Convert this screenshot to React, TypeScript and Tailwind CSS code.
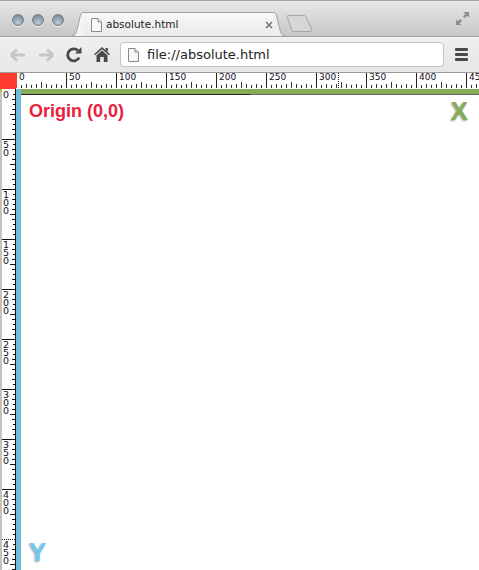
const HORIZONTAL = [0, 50, 100, 150, 200, 250, 300, 350, 400, 450];
const VERTICAL = [0, 50, 100, 150, 200, 250, 300, 350, 400, 450];
const TICKS = [1, 2, 3, 4, 5, 6, 7, 8, 9];

function Light() {
  return (
    <div className="h-[12px] w-[12px] rounded-full border border-[#77818a] bg-[radial-gradient(circle_at_50%_75%,#c3d2dd_0%,#94a5b3_45%,#6f7e8b_100%)] shadow-[0_1px_0_#f4f4f4]" />
  );
}

function PageIcon() {
  return (
    <svg viewBox="0 0 11 14" className="h-[14px] w-[11px] shrink-0">
      <path d="M.5.5H7L10.5 4V13.5H.5Z" fill="#f8f8f8" stroke="#8a8a8a" />
      <path d="M7 .5V4H10.5" fill="#e4e4e4" stroke="#8a8a8a" />
    </svg>
  );
}

function Tab() {
  return (
    <div className="ml-[8px] flex h-[24px] items-stretch self-end">
      <svg viewBox="0 0 11 24" className="h-[24px] w-[11px] shrink-0">
        <path d="M0 23.5C3 23.5 4 22 5 18L8 5C8.6 2 9.5.5 11 .5V24H0Z" fill="#f3f3f3" />
        <path d="M0 23.5C3 23.5 4 22 5 18L8 5C8.6 2 9.5.5 11 .5" fill="none" stroke="#a2a2a2" />
      </svg>
      <div className="flex w-[191px] shrink-0 items-center border-t border-[#a2a2a2] bg-[linear-gradient(#f7f7f7,#ebebeb)] pl-[8px]">
        <PageIcon />
        <span className="ml-[4px] w-[159px] font-['DejaVu_Sans',sans-serif] text-[10.5px] text-[#222]">absolute.html</span>
        <svg viewBox="0 0 8 8" className="h-[8px] w-[8px] shrink-0">
          <path d="M1 1L7 7M7 1L1 7" stroke="#777" strokeWidth="1.6" />
        </svg>
      </div>
      <svg viewBox="0 0 11 24" className="h-[24px] w-[11px] shrink-0">
        <path d="M11 23.5C8 23.5 7 22 6 18L3 5C2.4 2 1.5.5 0 .5V24H11Z" fill="#eeeeee" />
        <path d="M11 23.5C8 23.5 7 22 6 18L3 5C2.4 2 1.5.5 0 .5" fill="none" stroke="#a2a2a2" />
      </svg>
    </div>
  );
}

function TitleBar() {
  return (
    <div className="flex h-[37px] shrink-0 items-center border-t border-b border-t-[#a6a6a6] border-b-[#a2a2a2] bg-[linear-gradient(#e8e8e8,#c6c6c6)]">
      <div className="ml-[12px] flex gap-[8px] pt-[3px]">
        <Light />
        <Light />
        <Light />
      </div>
      <Tab />
      <svg viewBox="0 0 27 17" className="ml-[1px] mt-[9px] h-[17px] w-[27px] shrink-0">
        <path d="M1 1.5C1 1 1.5.5 2 .5H18C19 .5 19.5 1 20 2L25.5 14C26 15.5 25.5 16.5 24 16.5H8C7 16.5 6.3 16 5.8 15Z" fill="#d6d6d6" stroke="#a4a4a4" />
      </svg>
      <svg viewBox="0 0 16 16" className="ml-auto mr-[9px] h-[15px] w-[15px] shrink-0">
        <path d="M9 1H15V7L13 5L10.5 7.5L8.5 5.5L11 3Z" fill="#8f8f8f" />
        <path d="M7 15H1V9L3 11L5.5 8.5L7.5 10.5L5 13Z" fill="#8f8f8f" />
      </svg>
    </div>
  );
}

function Toolbar() {
  return (
    <div className="flex h-[36px] shrink-0 items-center border-b border-[#9c9c9c] bg-[linear-gradient(#f0f0f0,#e6e6e6)]">
      <svg viewBox="0 0 16 14" className="ml-[10px] h-[14px] w-[16px] shrink-0">
        <path d="M1 7L7 1.5M1 7L7 12.5M1 7H15" fill="none" stroke="#c6c6c6" strokeWidth="3" />
      </svg>
      <svg viewBox="0 0 16 14" className="ml-[12px] h-[14px] w-[16px] shrink-0">
        <path d="M15 7L9 1.5M15 7L9 12.5M15 7H1" fill="none" stroke="#c6c6c6" strokeWidth="3" />
      </svg>
      <svg viewBox="0 0 16 16" className="ml-[12px] h-[16px] w-[16px] shrink-0">
        <path d="M13.2 10.5A6 6 0 1 1 12 3.6" fill="none" stroke="#4a4a4a" strokeWidth="2.8" />
        <path d="M9 6.5H15.5V0Z" fill="#4a4a4a" />
      </svg>
      <svg viewBox="0 0 16 15" className="ml-[12px] h-[15px] w-[16px] shrink-0">
        <path d="M8 0L16 7.2L15 8.3L8 2.2L1 8.3L0 7.2Z" fill="#4a4a4a" />
        <path d="M8 3.4L13.5 8.2V15H9.8V10H6.2V15H2.5V8.2Z" fill="#4a4a4a" />
        <path d="M11.5 1H13.8V5L11.5 3Z" fill="#4a4a4a" />
      </svg>
      <div className="ml-[10px] flex h-[25px] w-[324px] shrink-0 items-center rounded-[4px] border border-[#c4c4c4] bg-white pl-[7px]">
        <PageIcon />
        <span className="ml-[8px] font-['DejaVu_Sans',sans-serif] text-[13px] text-[#222]">file://absolute.html</span>
      </div>
      <div className="ml-[11px] flex flex-col gap-[2px]">
        <div className="h-[3px] w-[13px] rounded-[1px] bg-[#4a4a4a]" />
        <div className="h-[3px] w-[13px] rounded-[1px] bg-[#4a4a4a]" />
        <div className="h-[3px] w-[13px] rounded-[1px] bg-[#4a4a4a]" />
      </div>
    </div>
  );
}

function TopRuler() {
  return (
    <div className="flex h-[16px] shrink-0 overflow-hidden bg-white">
      <div className="w-[16px] shrink-0 bg-[#ff3b30]" />
      {HORIZONTAL.map((n) => (
        <div
          key={n}
          className={`relative flex h-[15px] w-[50px] shrink-0 flex-col justify-between border-l ${n === 0 ? "border-[#ff3b30]" : "border-[#222]"}`}
        >
          <span className="pl-[2px] font-['DejaVu_Sans',sans-serif] text-[9px] leading-[9px] text-[#112]">{n}</span>
          <div className="flex h-[6px] items-end gap-[4px] pl-[4px]">
            {TICKS.map((t) => (
              <div key={t} className={t === 5 ? "h-[6px] w-[1px] bg-[#333]" : t % 2 === 0 ? "h-[4px] w-[1px] bg-[#333]" : "h-[3px] w-[1px] bg-[#333]"} />
            ))}
          </div>
          {n === 300 && <div className="absolute left-[21px] top-0 h-[15px] border-l border-dotted border-[#222]" />}
        </div>
      ))}
    </div>
  );
}

function LeftRuler() {
  return (
    <div className="flex w-[16px] shrink-0 overflow-hidden">
      <div className="w-[2px] shrink-0 bg-[#c2c2c2]">
        <div className="h-[3px] bg-[#a4c639]" />
      </div>
      <div className="w-[14px] shrink-0 border-r border-[#111] bg-white">
        {VERTICAL.map((n) => (
          <div
            key={n}
            className={`flex h-[50px] border-t ${n === 0 ? "border-white" : n === 450 ? "border-dotted border-[#111]" : "border-[#111]"}`}
          >
            <div className="w-[7px] shrink-0 break-all pl-[1px] pt-[1px] text-center font-['DejaVu_Sans',sans-serif] text-[9.5px] leading-[8px] text-[#112]">
              {n}
            </div>
            <div className="flex flex-1 flex-col items-end gap-[4px] pt-[4px]">
              {TICKS.map((t) => (
                <div key={t} className={t === 5 ? "h-[1px] w-[5px] bg-[#111]" : t % 2 === 0 ? "h-[1px] w-[3px] bg-[#111]" : "h-[1px] w-[2px] bg-[#111]"} />
              ))}
            </div>
          </div>
        ))}
      </div>
    </div>
  );
}

export default function App() {
  return (
    <div className="flex h-[570px] w-[479px] flex-col overflow-hidden bg-white">
      <TitleBar />
      <Toolbar />
      <TopRuler />
      <div className="flex min-h-0 flex-1">
        <LeftRuler />
        <div className="w-[5px] shrink-0 bg-[#6fbbdc]" />
        <div className="flex min-w-0 flex-1 flex-col">
          <div className="h-[5px] shrink-0 bg-[#85ad58]" />
          <div className="h-[1px] shrink-0 bg-[linear-gradient(to_right,#222_229px,#666_229px)]" />
          <div className="flex flex-1 flex-col justify-between pb-[5px] pl-[8px] pr-[11px] pt-[1px] font-['Liberation_Sans',sans-serif] font-bold">
            <div className="flex items-start justify-between">
              <span className="mt-[3px] text-[18px] leading-[24px] text-[#e8203c]">Origin (0,0)</span>
              <span className="text-[26px] leading-[30px] text-[#85ad58] [text-shadow:-1px_1px_2px_#999]">X</span>
            </div>
            <span className="text-[26px] leading-[26px] text-[#70c8ee] [text-shadow:-1px_1px_2px_#999]">Y</span>
          </div>
        </div>
      </div>
    </div>
  );
}
